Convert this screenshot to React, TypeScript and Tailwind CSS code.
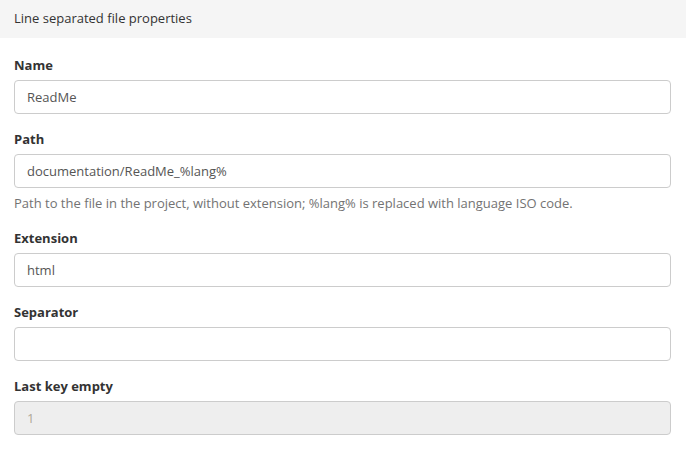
const fields = [
  { label: "Name", value: "ReadMe" },
  {
    label: "Path",
    value: "documentation/ReadMe_%lang%",
    help: "Path to the file in the project, without extension; %lang% is replaced with language ISO code.",
  },
  { label: "Extension", value: "html" },
  { label: "Separator", value: "" },
  { label: "Last key empty", value: "1", disabled: true },
];

export default function App() {
  return (
    <div className="w-[686px] h-[455px] bg-white text-[13px] text-[#333] font-['Open_Sans',sans-serif]">
      <div className="h-[38px] bg-[#f5f5f5] px-[14px] flex items-center">Line separated file properties</div>
      <div className="px-[14px] pr-[15px] pt-[17px]">
        {fields.map((f) => (
          <div key={f.label} className="mb-[15px]">
            <label className="block font-bold leading-[20px] mb-[5px]">{f.label}</label>
            <input
              readOnly
              disabled={f.disabled}
              value={f.value}
              className={
                "block w-full h-[34px] px-3 border border-[#ccc] rounded-[4px] outline-none " +
                (f.disabled ? "bg-[#eee] text-[#b0a898]" : "bg-white text-[#555]")
              }
            />
            {f.help && <p className="mt-[5px] leading-[20px] text-[#737373]">{f.help}</p>}
          </div>
        ))}
      </div>
    </div>
  );
}
